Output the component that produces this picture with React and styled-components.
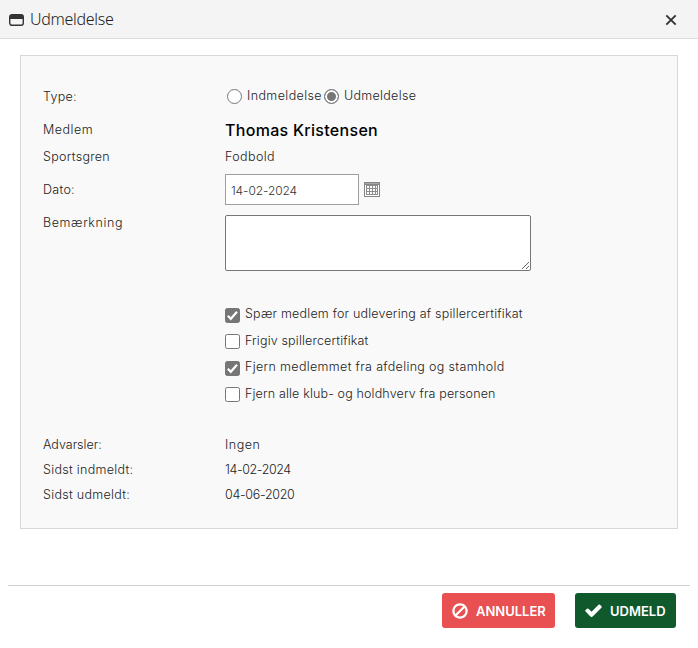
import React, { useState } from "react";
import styled, { createGlobalStyle } from "styled-components";

const GlobalStyle = createGlobalStyle`
  * {
    box-sizing: border-box;
  }
  body {
    margin: 0;
    background: #ffffff;
    font-family: Inter, "Open Sans", sans-serif;
    font-size: 12.5px;
    font-weight: 300;
    color: #222222;
  }
`;

const Dialog = styled.div`
  display: flex;
  flex-direction: column;
  width: 698px;
  height: 648px;
  background: #ffffff;
  overflow: hidden;
`;

const Header = styled.header`
  display: flex;
  align-items: center;
  height: 39px;
  padding: 0 20px 0 9px;
  background: #f4f4f4;
  border-bottom: 1px solid #dcdcdc;
`;

const Title = styled.h1`
  flex: 1;
  margin: 0 0 0 6px;
  font: 300 16px/22px "Noto Sans", sans-serif;
  letter-spacing: ${(props) => props.$spacing}px;
`;

const CloseButton = styled.button`
  display: flex;
  margin-top: 2px;
  padding: 0;
  border: 0;
  background: none;
`;

const Panel = styled.main`
  height: 474px;
  margin: 16px 20px 0;
  padding: 24px 22px 0;
  background: #f9f9f9;
  border: 1px solid #d8d8d8;
`;

const Row = styled.div`
  display: grid;
  grid-template-columns: 182px 1fr;
  align-items: ${(props) => (props.$top ? "start" : "center")};
  height: ${(props) => props.$height}px;
`;

const Text = styled.span`
  line-height: 20px;
  white-space: nowrap;
  letter-spacing: ${(props) => props.$spacing || 0}px;
`;

const MemberName = styled.strong`
  margin-top: -1px;
  font-size: 16px;
  font-weight: 500;
  line-height: 20px;
  color: #000000;
  letter-spacing: ${(props) => props.$spacing}px;
`;

const RadioGroup = styled.div`
  display: flex;
  padding-left: 2px;
`;

const RadioLabel = styled.label`
  display: flex;
  align-items: center;
  gap: 5px;
  width: 97px;
`;

const RadioMark = styled.span`
  flex: none;
  width: 15px;
  height: 15px;
  border: 1px solid #767676;
  border-radius: 50%;
  background: ${(props) => (props.$checked ? "#767676" : "#ffffff")};
  box-shadow: ${(props) => (props.$checked ? "inset 0 0 0 2px #ffffff" : "none")};
`;

const HiddenInput = styled.input`
  display: none;
`;

const DateField = styled.div`
  display: flex;
  align-items: center;
  gap: 5px;
  margin-top: -1px;
`;

const DateInput = styled.input`
  width: 134px;
  height: 31px;
  padding: 2px 5px 0;
  border: 1px solid #a0a0a0;
  background: #ffffff;
  font: inherit;
  font-size: 12px;
  color: #333333;
  letter-spacing: ${(props) => props.$spacing}px;
`;

const Remark = styled.textarea`
  display: block;
  width: 306px;
  height: 56px;
  margin-top: 2px;
  border: 1px solid #767676;
  border-radius: 2px;
  background: #ffffff;
  resize: both;
`;

const CheckList = styled.div`
  display: flex;
  flex-direction: column;
  padding-left: 182px;
  height: 130px;
`;

const CheckLabel = styled.label`
  display: flex;
  align-items: center;
  gap: 5px;
  height: 26.5px;
`;

const CheckText = styled(Text)`
  margin-top: -2px;
`;

const Footer = styled.footer`
  display: flex;
  gap: 20px;
  justify-content: flex-end;
  margin: 56px 8px 0;
  padding: 7px 14px 0 0;
  border-top: 1px solid #d0d0d0;
`;

const Button = styled.button`
  display: flex;
  align-items: center;
  gap: 7px;
  width: ${(props) => props.$width}px;
  height: 35px;
  padding: 0 0 0 9px;
  border: 0;
  border-radius: 3px;
  background: ${(props) => props.$color};
  color: #ffffff;
  font: 600 13px/20px Inter, sans-serif;
  letter-spacing: ${(props) => props.$spacing}px;
  white-space: nowrap;
`;

const WindowSvg = styled.svg`
  margin-top: 2px;
`;

const WindowIcon = () => (
  <WindowSvg width="15" height="12" viewBox="0 0 15 12">
    <rect x="0.7" y="0.7" width="13.6" height="10.6" rx="2.2" fill="#f4f4f4" stroke="#333" strokeWidth="1.4" />
    <path d="M1 5V2.7Q1 1 2.7 1h9.6Q14 1 14 2.7V5z" fill="#333" />
  </WindowSvg>
);

const CloseIcon = () => (
  <svg width="14" height="14" viewBox="0 0 14 14">
    <path d="M2.3 2.3l9.4 9.4M11.7 2.3l-9.4 9.4" stroke="#333" strokeWidth="1.9" />
  </svg>
);

const CalendarIcon = () => (
  <svg width="16" height="15" viewBox="0 0 16 15" shapeRendering="crispEdges">
    <path d="M0 0h16v15H0z" fill="#858585" />
    <path d="M1 1h14v1H1z" fill="#a8a8a8" />
    <path d="M1 3h14v11H1z" fill="#ffffff" />
    <path d="M2 3h12v10H2z" fill="#8c8c8c" />
    <path
      d="M3 4h2v2H3zM6 4h2v2H6zM9 4h2v2H9zM12 4h1v2h-1zM3 7h2v2H3zM6 7h2v2H6zM9 7h2v2H9zM12 7h1v2h-1zM3 10h2v2H3zM6 10h2v2H6zM9 10h2v2H9zM12 10h1v2h-1z"
      fill="#ffffff"
    />
  </svg>
);

const CheckMark = ({ checked }) => (
  <svg width="15" height="15" viewBox="0 0 15 15">
    <rect
      x="0.5"
      y="0.5"
      width="14"
      height="14"
      rx="1.8"
      fill={checked ? "#767676" : "#fff"}
      stroke="#767676"
    />
    {checked && <path d="M2.8 7.8l3 3 6.2-7" fill="none" stroke="#fff" strokeWidth="2.2" />}
  </svg>
);

const BanIcon = () => (
  <svg width="18" height="18" viewBox="0 0 1792 1792" fill="currentColor">
    <path d="M1440 893q0-161-87-295l-754 753q137 89 297 89 111 0 211.500-43.500t173.500-116.500 116-174.500 43-212.500zm-999 299l755-754q-135-91-300-91-148 0-273 73t-198 199-73 274q0 162 89 299zm1223-299q0 157-61 300t-163.500 246-245 164-298.500 61-298.500-61-245-164-163.500-246-61-300 61-299.500 163.500-245.500 245-164 298.500-61 298.500 61 245 164 163.500 245.500 61 299.500z" />
  </svg>
);

const TickIcon = () => (
  <svg width="19" height="19" viewBox="0 0 1792 1792" fill="currentColor">
    <path d="M1671 566q0 40-28 68l-724 724-136 136q-28 28-68 28t-68-28l-136-136-362-362q-28-28-28-68t28-68l136-136q28-28 68-28t68 28l294 295 656-657q28-28 68-28t68 28l136 136q28 28 28 68z" />
  </svg>
);

const types = [
  { label: "Indmeldelse", spacing: 0.4 },
  { label: "Udmeldelse", spacing: 0.3 },
];

const options = [
  { label: "Spær medlem for udlevering af spillercertifikat", checked: true, spacing: 0.2 },
  { label: "Frigiv spillercertifikat", checked: false, spacing: 0.16 },
  { label: "Fjern medlemmet fra afdeling og stamhold", checked: true, spacing: 0.34 },
  { label: "Fjern alle klub- og holdhverv fra personen", checked: false, spacing: 0.15 },
];

const history = [
  { label: "Advarsler:", value: "Ingen", spacing: 0, valueSpacing: 0.55 },
  { label: "Sidst indmeldt:", value: "14-02-2024", spacing: 0.3, valueSpacing: -0.4 },
  { label: "Sidst udmeldt:", value: "04-06-2020", spacing: 0.3, valueSpacing: -0.3 },
];

function App() {
  const [type, setType] = useState("Udmeldelse");
  const [date, setDate] = useState("14-02-2024");
  const [checks, setChecks] = useState(options.map((o) => o.checked));

  const toggle = (index) => {
    setChecks(checks.map((c, i) => (i === index ? !c : c)));
  };

  return (
    <Dialog>
      <GlobalStyle />
      <Header>
        <WindowIcon />
        <Title $spacing={-0.3}>Udmeldelse</Title>
        <CloseButton aria-label="Luk">
          <CloseIcon />
        </CloseButton>
      </Header>
      <Panel>
        <Row $height={33}>
          <Text $spacing={0.3}>Type:</Text>
          <RadioGroup>
            {types.map(({ label, spacing }) => (
              <RadioLabel key={label}>
                <HiddenInput type="radio" checked={type === label} onChange={() => setType(label)} />
                <RadioMark $checked={type === label} />
                <CheckText $spacing={spacing}>{label}</CheckText>
              </RadioLabel>
            ))}
          </RadioGroup>
        </Row>
        <Row $height={34}>
          <Text $spacing={0.5}>Medlem</Text>
          <MemberName $spacing={0.3}>Thomas Kristensen</MemberName>
        </Row>
        <Row $height={20}>
          <Text $spacing={0.3}>Sportsgren</Text>
          <Text $spacing={0.4}>Fodbold</Text>
        </Row>
        <Row $height={46}>
          <Text $spacing={0.3}>Dato:</Text>
          <DateField>
            <DateInput $spacing={-0.1} value={date} onChange={(e) => setDate(e.target.value)} />
            <CalendarIcon />
          </DateField>
        </Row>
        <Row $height={89} $top>
          <Text $spacing={0.6}>Bemærkning</Text>
          <Remark />
        </Row>
        <CheckList>
          {options.map(({ label, spacing }, i) => (
            <CheckLabel key={label}>
              <HiddenInput type="checkbox" checked={checks[i]} onChange={() => toggle(i)} />
              <CheckMark checked={checks[i]} />
              <CheckText $spacing={spacing}>{label}</CheckText>
            </CheckLabel>
          ))}
        </CheckList>
        {history.map(({ label, value, spacing, valueSpacing }) => (
          <Row key={label} $height={25}>
            <Text $spacing={spacing}>{label}</Text>
            <Text $spacing={valueSpacing}>{value}</Text>
          </Row>
        ))}
      </Panel>
      <Footer>
        <Button $color="#e85052" $width={113} $spacing={0}>
          <BanIcon />
          ANNULLER
        </Button>
        <Button $color="#10592d" $width={101} $spacing={0}>
          <TickIcon />
          UDMELD
        </Button>
      </Footer>
    </Dialog>
  );
}

export default App;
